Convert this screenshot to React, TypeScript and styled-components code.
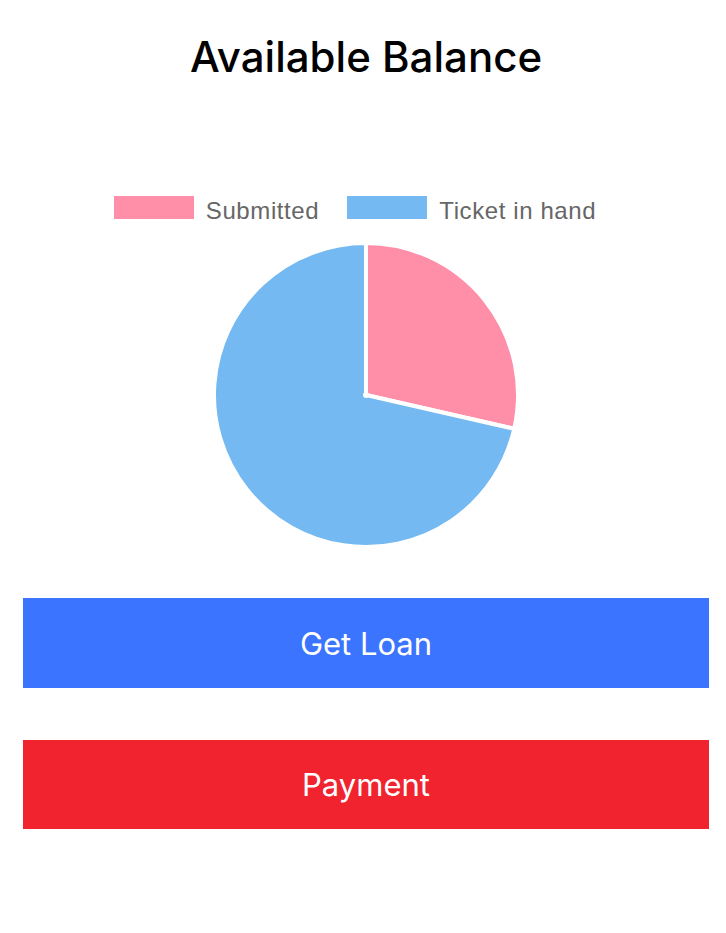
import React from 'react';
import styled, { createGlobalStyle } from 'styled-components';

const GlobalStyle = createGlobalStyle`
  body {
    margin: 0;
    background: #ffffff;
    font-family: Inter, "Liberation Sans", sans-serif;
  }
`;

const slices = [
  { label: 'Submitted', value: 2, color: '#FF8FA9' },
  { label: 'Ticket in hand', value: 5, color: '#74B9F1' },
];

const Page = styled.div`
  width: 726px;
  height: 933px;
  box-sizing: border-box;
  padding: 0 17px 0 23px;
  display: flex;
  flex-direction: column;
`;

const Title = styled.h1`
  margin: 0;
  padding-top: 32px;
  height: 50px;
  font-size: 42px;
  line-height: 50px;
  font-weight: 500;
  text-align: center;
  color: #000;
`;

const Legend = styled.div`
  margin-top: 114px;
  margin-right: 22px;
  display: flex;
  justify-content: center;
  gap: 28px;
`;

const LegendItem = styled.div`
  display: flex;
  align-items: flex-start;
  gap: 12px;
`;

const Swatch = styled.span<{ $color: string }>`
  width: 80px;
  height: 23px;
  background: ${(p) => p.$color};
`;

const LegendText = styled.span`
  margin-top: 3px;
  font-family: "Liberation Sans", Arial, sans-serif;
  font-size: 24px;
  line-height: 24px;
  letter-spacing: 0.6px;
  color: #666;
`;

const ChartWrap = styled.div`
  margin-top: 17px;
  display: flex;
  justify-content: center;
`;

const Button = styled.button<{ $bg: string; $gap: number; $h: number }>`
  display: flex;
  align-items: center;
  justify-content: center;
  width: 100%;
  height: ${(p) => p.$h}px;
  margin-top: ${(p) => p.$gap}px;
  border: none;
  padding: 0;
  background: ${(p) => p.$bg};
  color: #fff;
  font-family: Inter, "Liberation Sans", sans-serif;
  font-size: 31px;
  font-weight: 400;
`;

const Pie = () => {
  const r = 152;
  const c = 155;
  const total = slices.reduce((s, x) => s + x.value, 0);
  let start = -Math.PI / 2;
  return (
    <svg width={310} height={310} viewBox="0 0 310 310">
      {slices.map((s) => {
        const a = (s.value / total) * Math.PI * 2;
        const end = start + a;
        const x1 = c + r * Math.cos(start);
        const y1 = c + r * Math.sin(start);
        const x2 = c + r * Math.cos(end);
        const y2 = c + r * Math.sin(end);
        const large = a > Math.PI ? 1 : 0;
        const d = `M${c},${c} L${x1},${y1} A${r},${r} 0 ${large} 1 ${x2},${y2} Z`;
        start = end;
        return (
          <path
            key={s.label}
            d={d}
            fill={s.color}
            stroke="#fff"
            strokeWidth={4}
            strokeLinejoin="round"
          />
        );
      })}
      <circle cx={c} cy={c} r={3} fill="#fff" />
    </svg>
  );
};

const App = () => (
  <Page>
    <GlobalStyle />
    <Title>Available Balance</Title>
    <Legend>
      {slices.map((s) => (
        <LegendItem key={s.label}>
          <Swatch $color={s.color} />
          <LegendText>{s.label}</LegendText>
        </LegendItem>
      ))}
    </Legend>
    <ChartWrap>
      <Pie />
    </ChartWrap>
    <Button $bg="#3B74FF" $gap={48} $h={90}>
      Get Loan
    </Button>
    <Button $bg="#F0232F" $gap={52} $h={89}>
      Payment
    </Button>
  </Page>
);

export default App;
